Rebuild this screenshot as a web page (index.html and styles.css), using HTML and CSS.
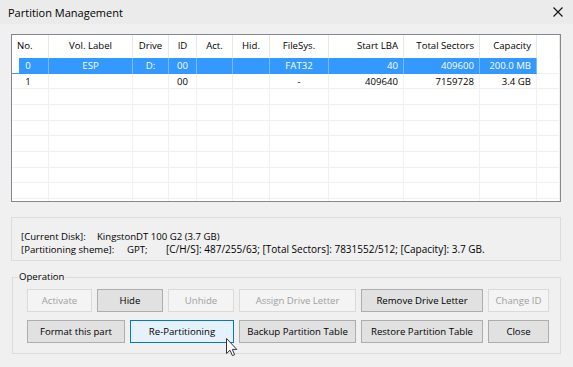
FILE: index.html
```html
<!DOCTYPE html>
<html lang="en">
<head>
    <meta charset="UTF-8">
    <meta name="viewport" content="width=device-width, initial-scale=1.0">
    <title>Partition Management</title>
    <link rel="stylesheet" href="styles.css">
</head>
<body>
    <div class="window">
        <div class="titlebar">
            <span class="title">Partition Management</span>
            <svg class="close" width="10" height="10" viewBox="0 0 10 10">
                <path d="M0.5 0.5 L9.5 9.5 M9.5 0.5 L0.5 9.5" stroke="#111" stroke-width="1.1" fill="none"/>
            </svg>
        </div>

        <div class="content">
            <div class="listview">
                <div class="row head">
                    <div class="c no-h">No.</div>
                    <div class="c ctr">Vol. Label</div>
                    <div class="c ctr">Drive</div>
                    <div class="c ctr">ID</div>
                    <div class="c ctr">Act.</div>
                    <div class="c ctr">Hid.</div>
                    <div class="c ctr">FileSys.</div>
                    <div class="c num">Start LBA</div>
                    <div class="c num">Total Sectors</div>
                    <div class="c num">Capacity</div>
                    <div class="c"></div>
                </div>
                <div id="rows"></div>
            </div>

            <div class="info">
                <div><span class="lbl-disk">[Current Disk]:</span>KingstonDT 100 G2 (3.7 GB)</div>
                <div><span class="lbl-scheme">[Partitioning sheme]:</span><span class="lbl-gpt">GPT;</span><span class="geo">[C/H/S]: 487/255/63; [Total Sectors]: 7831552/512; [Capacity]: 3.7 GB.</span></div>
            </div>

            <fieldset class="group">
                <legend>Operation</legend>
                <div class="btns">
                    <div class="btn-row">
                        <button class="btn w-small" disabled>Activate</button>
                        <button class="btn w-hide">Hide</button>
                        <button class="btn w-hide" disabled>Unhide</button>
                        <button class="btn w-mid" disabled>Assign Drive Letter</button>
                        <button class="btn w-wide">Remove Drive Letter</button>
                        <button class="btn w-last" disabled>Change ID</button>
                    </div>
                    <div class="btn-row">
                        <button class="btn w-format">Format this part</button>
                        <button class="btn w-repart hover">Re-Partitioning</button>
                        <button class="btn w-mid">Backup Partition Table</button>
                        <button class="btn w-wide">Restore Partition Table</button>
                        <button class="btn w-last">Close</button>
                    </div>
                </div>
            </fieldset>
        </div>

        <svg class="cursor" width="12" height="19" viewBox="0 0 12 19">
            <path d="M0.5 0.5 L0.5 15.5 L4 12.2 L6.4 17.6 L8.6 16.7 L6.3 11.4 L10.8 11.4 Z" fill="#fff" stroke="#333" stroke-width="1" stroke-linejoin="round"/>
        </svg>
    </div>

    <script>
        const partitions = [
            { no: '0', label: 'ESP', drive: 'D:', id: '00', act: '', hid: '', fs: 'FAT32', start: '40', total: '409600', cap: '200.0 MB', sel: true },
            { no: '1', label: '', drive: '', id: '00', act: '', hid: '', fs: '-', start: '409640', total: '7159728', cap: '3.4 GB' }
        ];
        const cols = ['no', 'label', 'drive', 'id', 'act', 'hid', 'fs', 'start', 'total', 'cap'];
        const aligns = ['no', 'ctr', 'ctr', 'ctr', 'ctr', 'ctr', 'ctr', 'num', 'num', 'num'];

        const rowsEl = document.getElementById('rows');
        for (let i = 0; i < 10; i++) {
            const p = partitions[i];
            const row = document.createElement('div');
            row.className = 'row' + (p && p.sel ? ' sel' : '');
            let html = '';
            cols.forEach((key, k) => {
                html += `<div class="c ${aligns[k]}">${p ? p[key] : ''}</div>`;
            });
            html += '<div class="c fill"></div>';
            row.innerHTML = html;
            rowsEl.appendChild(row);
        }
    </script>
</body>
</html>
```

FILE: styles.css
```css
* {
    box-sizing: border-box;
}
body {
    margin: 0;
    background-color: #f0f0f0;
    font-family: "Open Sans", "Liberation Sans", sans-serif;
    font-size: 9.6px;
    color: #000;
}
.window {
    position: relative;
    width: 573px;
    height: 367px;
    overflow: hidden;
}
.titlebar {
    height: 24px;
    background-color: #ebebeb;
    display: flex;
    align-items: center;
    justify-content: space-between;
    padding: 0 10px 0 8px;
}
.title {
    font-size: 11px;
}
.close {
    margin-top: -1px;
}
.content {
    padding: 10px 12px 0 11px;
}

/* list view */
.listview {
    width: 550px;
    height: 168px;
    border: 1px solid #828790;
    background-color: #fff;
    overflow: hidden;
}
.row {
    display: grid;
    grid-template-columns: 37px 84px 36px 28px 36px 37px 59px 75px 76px 57px 1fr;
    height: 15.67px;
    line-height: 15px;
}
.row .c {
    border-right: 1px solid #f0f0f0;
    border-bottom: 1px solid #f0f0f0;
    white-space: nowrap;
    overflow: hidden;
}
.head {
    height: 23px;
    line-height: 22px;
}
.head .c {
    border-bottom: none;
    border-right-color: #e8e8e8;
}
.no-h {
    padding-left: 5px;
}
.no {
    text-align: center;
    padding-right: 4px;
}
.ctr {
    text-align: center;
}
.num {
    text-align: right;
    padding-right: 5px;
}
.row.sel .c {
    background-color: #3399ff;
    color: #fff;
    border-right-color: #7dbcfc;
    border-bottom-color: #3399ff;
}
.row.sel .c:first-child {
    background: linear-gradient(90deg, #fff 7px, #3399ff 7px);
}
.row.sel .c.fill {
    background: #fff;
    border-right-color: #f0f0f0;
    border-bottom-color: #f0f0f0;
}

/* disk info */
.info {
    margin-top: 15px;
    width: 550px;
    height: 44px;
    border: 1px solid #dcdcdc;
    padding: 13px 0 0 9px;
    line-height: 12px;
    white-space: nowrap;
}
.lbl-disk {
    display: inline-block;
    width: 76px;
}
.lbl-scheme {
    display: inline-block;
    width: 106px;
}
.lbl-gpt {
    display: inline-block;
    width: 39px;
}
.geo {
    font-size: 10px;
}

/* operation group */
.group {
    margin: 10px 0 0 1px;
    width: 549px;
    border: 1px solid #dcdcdc;
    padding: 6px 0 10px 5px;
    min-width: 0;
}
.group legend {
    padding: 0 1px;
    line-height: 12px;
}
.btns {
    display: flex;
    flex-direction: column;
    gap: 8px;
    margin-left: 9px;
}
.btn-row {
    display: flex;
    gap: 5px;
}
.btn {
    height: 23px;
    padding: 0;
    border: 1px solid #adadad;
    background-color: #e1e1e1;
    font-family: "Open Sans", "Liberation Sans", sans-serif;
    font-size: 9.6px;
    color: #000;
}
.btn:disabled {
    background-color: #f4f4f4;
    border-color: #dadada;
    color: #a0a0a0;
}
.btn.hover {
    background-color: #e5f1fb;
    border-color: #0078d7;
}
.w-small {
    width: 65px;
}
.w-hide {
    width: 66px;
}
.w-mid {
    width: 117px;
}
.w-wide {
    width: 122px;
}
.w-last {
    width: 61px;
}
.w-format {
    width: 98px;
}
.w-repart {
    width: 104px;
}

.cursor {
    position: absolute;
    left: 226px;
    top: 338px;
}
```
